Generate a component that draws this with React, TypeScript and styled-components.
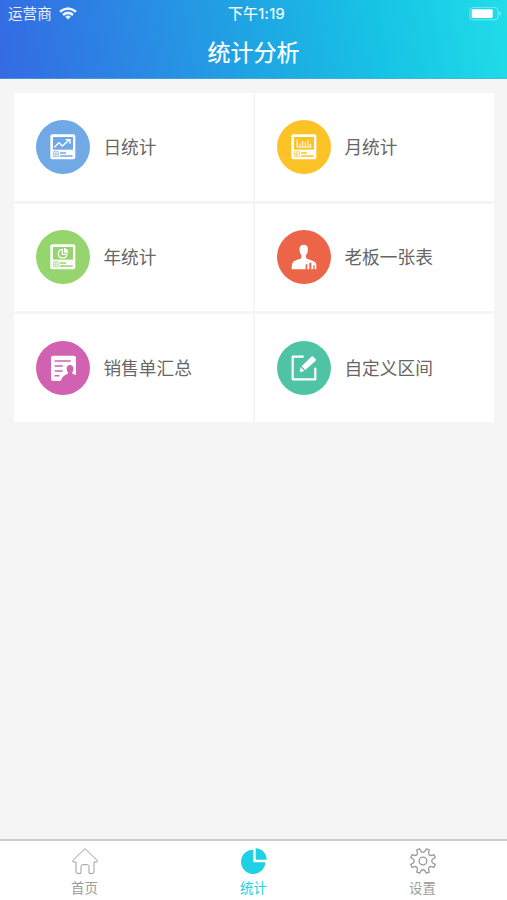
import React from 'react';
import styled, { createGlobalStyle } from 'styled-components';

const GlobalStyle = createGlobalStyle`
  * { box-sizing: border-box; }
  body {
    margin: 0;
    background: #f5f5f5;
    font-family: Inter, "Noto Sans CJK SC", sans-serif;
  }
`;

const Screen = styled.div`
  display: flex;
  flex-direction: column;
  height: 900px;
  overflow: hidden;
`;

const Header = styled.header`
  flex: none;
  height: 79px;
  color: #fff;
  background: linear-gradient(80deg, #356ae3 0%, #2a8ae4 28%, #1ea8e3 52%, #17c3e5 74%, #20dde8 100%);
  border-bottom: 1px solid rgba(90, 170, 220, 0.55);
`;

const StatusBar = styled.div`
  display: grid;
  grid-template-columns: 1fr auto 1fr;
  align-items: center;
  height: 27px;
  padding: 0 5px 0 8px;
  font-size: 14.6px;
  line-height: 27px;
`;

const Carrier = styled.div`
  display: flex;
  align-items: center;
  gap: 7px;
  padding-top: 1px;
  opacity: 0.9;

  svg { margin-top: -2px; }
`;

const Clock = styled.time`
  font-size: 14.8px;
  letter-spacing: 0.3px;
  padding-left: 3px;
  -webkit-text-stroke: 0.15px currentColor;
`;

const Power = styled.div`
  display: flex;
  justify-content: flex-end;
`;

const Title = styled.h1`
  margin: 0;
  text-align: center;
  font-size: 23px;
  font-weight: 400;
  line-height: 52px;
  -webkit-text-stroke: 0.2px currentColor;
`;

const Grid = styled.main`
  flex: 1;
  display: grid;
  grid-template-columns: 239px 239px;
  grid-auto-rows: 107.5px;
  gap: 3px 2px;
  padding: 14px 13px 0 14px;
`;

const Card = styled.a`
  display: flex;
  align-items: center;
  gap: 13.4px;
  padding-left: 22px;
  background: #fff;
  color: #666;
  font-size: 17.7px;
  line-height: 26px;
`;

const Label = styled.span`
  padding-top: 1.5px;
`;

const Disc = styled.span<{ $color: string }>`
  display: flex;
  align-items: center;
  justify-content: center;
  width: 54px;
  height: 54px;
  border-radius: 50%;
  background: ${(p) => p.$color};
  color: ${(p) => p.$color};
`;

const TabBar = styled.nav`
  flex: none;
  display: grid;
  grid-template-columns: repeat(3, 1fr);
  height: 61px;
  border-top: 2px solid #cdcdcd;
  background: #fff;
`;

const Tab = styled.a<{ $active?: boolean }>`
  display: flex;
  flex-direction: column;
  align-items: center;
  gap: 1.5px;
  padding-top: 6.5px;
  color: ${(p) => (p.$active ? '#20d0e4' : '#9c9c9c')};
  font-size: 13.4px;
  line-height: 26px;
`;

const Glyph = ({ children }: { children: React.ReactNode }) => (
  <svg width="26" height="26" viewBox="0 0 78 78" fill="none" stroke="currentColor">
    {children}
  </svg>
);

const Report = ({ children }: { children: React.ReactNode }) => (
  <Glyph>
    <rect x="1" y="1" width="75" height="75" rx="6" fill="#fff" stroke="none" />
    <rect x="9" y="9" width="60" height="38" fill="currentColor" stroke="none" />
    {children}
    <path d="M10 53H25V68H10ZM10 60.5H25M17.5 53V68" strokeWidth="2" />
    <path d="M30 57H48M30 66H68" strokeWidth="4" />
  </Glyph>
);

const DayIcon = () => (
  <Report>
    <path d="M13 40 27 26 37 36 58 17M47 17H60V29" stroke="#fff" strokeWidth="4" />
  </Report>
);

const MonthIcon = () => (
  <Report>
    <path d="M18 17V39H62" stroke="#fff" strokeWidth="3" />
    <path d="M27 37V28M35 37V21M43 37V25M51 37V19M58 37V30" stroke="#fff" strokeWidth="3" />
  </Report>
);

const YearIcon = () => (
  <Report>
    <path d="M37 16A13 13 0 1 0 51 31H37Z" stroke="#fff" strokeWidth="3.6" />
    <path d="M42 12A15 15 0 0 1 55 26H42Z" fill="#fff" stroke="none" />
  </Report>
);

const BossIcon = () => (
  <Glyph>
    <path
      d="M38 2C28 2 24 9 26 20C26 27 29 30 31 33V42C24 48 10 47 5 56Q2 60 2 76H44V61H49V76H55V56H61V76H67V64H71V76H76V62Q75 53 64 50C55 47 49 45 45 42V33C48 30 50 26 50 20C52 8 48 2 38 2Z"
      fill="#fff"
      stroke="none"
    />
  </Glyph>
);

const SalesIcon = () => (
  <Glyph>
    <path
      d="M10 2H70Q78 2 78 9V60Q72 57 67 56V52C72 47 73 30 60 30C47 30 49 47 54 52V56C44 59 37 64 33 76Q32 78 29 78H10Q3 78 3 70V9Q3 2 10 2Z"
      fill="#fff"
      stroke="none"
    />
    <path d="M14 18H62M14 33H38M14 48H38M14 62H28" strokeWidth="4.5" />
  </Glyph>
);

const RangeIcon = () => (
  <Glyph>
    <path d="M38 5H5V73H73V38" stroke="#fff" strokeWidth="6.5" strokeLinejoin="round" />
    <path d="M61 5Q64 2 67 5L74 12Q76 15 73 18L43 45 32 34ZM29 37 40 48 26 52Z" fill="#fff" stroke="none" />
  </Glyph>
);

const HomeIcon = () => (
  <Glyph>
    <path
      d="M39 2 2 38Q1 42 5 42H12V73Q12 76 15 76H27V56Q27 50 33 50H45Q51 50 51 56V76H63Q66 76 66 73V42H73Q77 42 76 38Z"
      strokeWidth="3"
      strokeLinejoin="round"
    />
  </Glyph>
);

const PieIcon = () => (
  <Glyph>
    <path d="M37 5A36.5 36.5 0 1 0 73 43H37Z" fill="currentColor" stroke="none" />
    <path d="M44 1A34 34 0 0 1 77 35H44Z" fill="currentColor" stroke="none" />
  </Glyph>
);

const gearPoint = (radius: number, degrees: number) => {
  const a = (degrees * Math.PI) / 180;
  return `${(39 + radius * Math.cos(a)).toFixed(1)} ${(39 + radius * Math.sin(a)).toFixed(1)}`;
};

const gearOutline =
  Array.from({ length: 8 }, (_, i) => {
    const c = i * 45 + 22.5;
    return `${i ? 'L' : 'M'}${gearPoint(30, c - 11)}L${gearPoint(38, c - 7)}L${gearPoint(38, c + 7)}L${gearPoint(30, c + 11)}Q${gearPoint(23, c + 22.5)} ${gearPoint(30, c + 34)}`;
  }).join('') + 'Z';

const GearIcon = () => (
  <Glyph>
    <path d={gearOutline} strokeWidth="4" strokeLinejoin="round" />
    <circle cx="39" cy="39" r="11.5" strokeWidth="4" />
  </Glyph>
);

const WifiIcon = () => (
  <svg width="18" height="13" viewBox="0 0 18 13" fill="none" stroke="#fff" strokeWidth="2.6">
    <path d="M1 4.8Q9-1.8 17 4.8M4 7.9Q9 3.8 14 7.9" />
    <path d="M9 12.6 6.2 9.7Q9 7.5 11.8 9.7Z" fill="#fff" stroke="none" />
  </svg>
);

const BatteryIcon = () => (
  <svg width="33" height="14" viewBox="0 0 33 14">
    <rect x="0.9" y="0.4" width="28.2" height="12.4" rx="3.3" fill="none" stroke="#fff" strokeOpacity="0.4" />
    <rect x="2.7" y="2.2" width="21" height="8.8" rx="1.2" fill="#fff" />
    <path d="M30.5 4.2Q33 6.5 30.5 8.8Z" fill="#fff" fillOpacity="0.6" />
  </svg>
);

const entries = [
  { label: '日统计', color: '#70a9e5', Icon: DayIcon },
  { label: '月统计', color: '#fcc327', Icon: MonthIcon },
  { label: '年统计', color: '#96d46e', Icon: YearIcon },
  { label: '老板一张表', color: '#ec6549', Icon: BossIcon },
  { label: '销售单汇总', color: '#d062b1', Icon: SalesIcon },
  { label: '自定义区间', color: '#50c3a7', Icon: RangeIcon },
];

const tabs = [
  { label: '首页', Icon: HomeIcon },
  { label: '统计', Icon: PieIcon, active: true },
  { label: '设置', Icon: GearIcon },
];

export default function App() {
  return (
    <Screen>
      <GlobalStyle />
      <Header>
        <StatusBar>
          <Carrier>
            运营商
            <WifiIcon />
          </Carrier>
          <Clock>下午1:19</Clock>
          <Power>
            <BatteryIcon />
          </Power>
        </StatusBar>
        <Title>统计分析</Title>
      </Header>
      <Grid>
        {entries.map(({ label, color, Icon }) => (
          <Card key={label}>
            <Disc $color={color}>
              <Icon />
            </Disc>
            <Label>{label}</Label>
          </Card>
        ))}
      </Grid>
      <TabBar>
        {tabs.map(({ label, Icon, active }) => (
          <Tab key={label} $active={active}>
            <Icon />
            {label}
          </Tab>
        ))}
      </TabBar>
    </Screen>
  );
}
